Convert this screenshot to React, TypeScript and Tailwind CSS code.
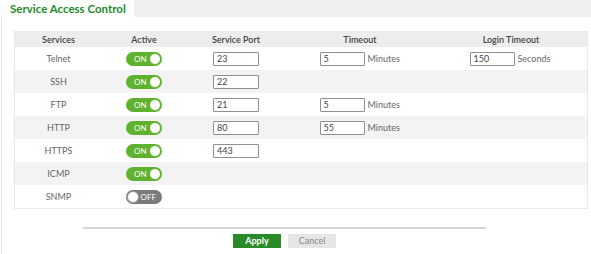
import React from "react";

interface Row {
  name: string;
  on: boolean;
  port?: string;
  timeout?: string;
  login?: string;
}

const rows: Row[] = [
  { name: "Telnet", on: true, port: "23", timeout: "5", login: "150" },
  { name: "SSH", on: true, port: "22" },
  { name: "FTP", on: true, port: "21", timeout: "5" },
  { name: "HTTP", on: true, port: "80", timeout: "55" },
  { name: "HTTPS", on: true, port: "443" },
  { name: "ICMP", on: true },
  { name: "SNMP", on: false },
];

const cols = "grid grid-cols-[87px_84px_100px_148px_154px]";

function Toggle({ on }: { on: boolean }) {
  if (on) {
    return (
      <div className="flex h-[14px] w-[36px] items-center justify-between rounded-full bg-[#5fb22d] pl-[8px] pr-[1px]">
        <span className="text-[8px] leading-none text-white">ON</span>
        <span className="h-[12px] w-[12px] rounded-full border border-[#5fb22d] bg-white" />
      </div>
    );
  }
  return (
    <div className="flex h-[14px] w-[36px] items-center justify-between rounded-full bg-[#7b7b7b] pl-[1px] pr-[6px]">
      <span className="h-[12px] w-[12px] rounded-full border border-[#9a9a9a] bg-white" />
      <span className="text-[8px] leading-none text-white">OFF</span>
    </div>
  );
}

function Field({ value, w = "w-[46px]" }: { value: string; w?: string }) {
  return (
    <div
      className={`flex h-[14px] ${w} items-center rounded-[1px] border border-[#8f8f8f] bg-white pl-[3px] text-[9px] text-[#444]`}
    >
      {value}
    </div>
  );
}

export default function App() {
  return (
    <div
      className="h-[254px] w-[591px] bg-white text-[#666]"
      style={{ fontFamily: "Lato, 'Open Sans', sans-serif" }}
    >
      <div className="flex h-[17px] bg-[#efefef]">
        <div className="flex w-[134px] items-center bg-white pl-[10px] text-[11.5px] font-bold text-[#248a2a]">
          Service Access Control
        </div>
      </div>
      <div className="ml-[1px] h-[237px] border-l border-[#e6e6e6] pl-[12px] pt-[14px]">
        <div className="w-[574px] border border-[#e8e8e8]">
          <div className={`${cols} h-[15px] items-center bg-[#ededed] text-[9px] font-semibold text-[#444]`}>
            <div className="text-center">Services</div>
            <div className="text-center">Active</div>
            <div className="text-center">Service Port</div>
            <div className="text-center">Timeout</div>
            <div className="text-center">Login Timeout</div>
          </div>
          {rows.map((r, i) => (
            <div
              key={r.name}
              className={`${cols} h-[23px] items-center text-[9px] ${i % 2 === 1 ? "bg-[#f3f3f3]" : "bg-white"}`}
            >
              <div className="text-center">{r.name}</div>
              <div className="flex justify-center">
                <Toggle on={r.on} />
              </div>
              <div className="flex justify-center">{r.port && <Field value={r.port} />}</div>
              <div className="flex items-center justify-center gap-[3px]">
                {r.timeout && (
                  <>
                    <Field value={r.timeout} w="w-[45px]" />
                    <span className="w-[33px]">Minutes</span>
                  </>
                )}
              </div>
              <div className="flex items-center justify-center gap-[3px]">
                {r.login && (
                  <>
                    <Field value={r.login} w="w-[45px]" />
                    <span className="w-[35px]">Seconds</span>
                  </>
                )}
              </div>
            </div>
          ))}
        </div>
        <div className="ml-[69px] mt-[18px] w-[403px] border-t-2 border-[#d6d6d6] pt-[5px]">
          <div className="flex justify-center gap-[7px]">
            <button className="h-[14px] w-[48px] bg-[#2a8a2a] text-[9px] font-bold text-white">
              Apply
            </button>
            <button className="h-[14px] w-[48px] bg-[#e6e6e6] text-[9px] text-[#888]">
              Cancel
            </button>
          </div>
        </div>
      </div>
    </div>
  );
}
